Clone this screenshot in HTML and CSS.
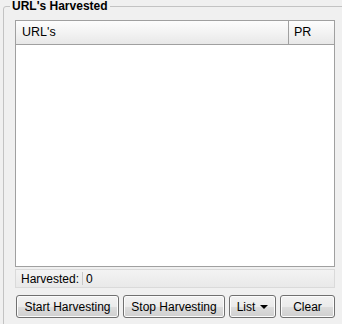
FILE: index.html
```html
<!DOCTYPE html>
<html>
<head>
<meta charset="utf-8">
<link rel="stylesheet" href="styles.css">
</head>
<body>
<fieldset class="group">
  <legend class="legend">URL's Harvested</legend>
  <div class="table">
    <div class="thead">
      <div class="th th-url">URL's</div>
      <div class="th th-pr">PR</div>
    </div>
    <div class="tbody"></div>
  </div>
  <div class="status">
    <span class="status-label">Harvested:</span>
    <span class="status-sep"></span>
    <span class="status-value">0</span>
  </div>
  <div class="buttons">
    <button class="btn btn-start">Start Harvesting</button>
    <button class="btn btn-stop">Stop Harvesting</button>
    <button class="btn btn-list">List <span class="caret"></span></button>
    <button class="btn btn-clear">Clear</button>
  </div>
</fieldset>
</body>
</html>
```
FILE: styles.css
```css
html, body {
  margin: 0;
  padding: 0;
  background: #f0f0f0;
  overflow: hidden;
}
body {
  width: 342px;
  height: 324px;
  font-family: "Liberation Sans", Arial, sans-serif;
  font-size: 12px;
  color: #000;
}
.group {
  margin: 0 0 0 3px;
  padding: 7px 10px 10px 11px;
  border: 1px solid #c3c3c3;
  border-radius: 3px;
  width: 320px;
}
.legend {
  margin-left: -5px;
  padding: 0 2px;
  font-weight: bold;
  font-size: 12px;
  line-height: 13px;
}
.table {
  width: 318px;
  height: 245px;
  border: 1px solid #a0a0a0;
  background: #fff;
  display: flex;
  flex-direction: column;
}
.thead {
  display: flex;
  height: 23px;
  border-bottom: 1px solid #a0a0a0;
  background: linear-gradient(#fdfdfd, #f3f3f3 50%, #e8e8e8);
}
.th {
  line-height: 23px;
  font-size: 12.5px;
}
.th-url {
  flex: 1;
  padding-left: 6px;
  border-right: 1px solid #a0a0a0;
}
.th-pr {
  width: 40px;
  padding-left: 5px;
}
.tbody {
  flex: 1;
  background: #fff;
}
.status {
  margin-top: 2px;
  width: 318px;
  height: 17px;
  border: 1px solid #dadada;
  background: linear-gradient(#f3f3f3, #e9e9e9);
  display: flex;
  align-items: center;
  font-size: 12px;
}
.status-label {
  padding-left: 5px;
}
.status-sep {
  width: 1px;
  height: 13px;
  background: #c8c8c8;
  margin: 0 3px 0 3px;
}
.buttons {
  display: flex;
  margin-top: 7px;
  margin-left: 1px;
}
.btn {
  box-sizing: border-box;
  height: 23px;
  margin: 0 4px 0 0;
  padding: 0;
  border: 1px solid #707070;
  border-radius: 3px;
  box-shadow: inset 0 0 0 1px #fcfcfc;
  background: linear-gradient(#f2f2f2 0%, #ebebeb 50%, #dddddd 51%, #cfcfcf 100%);
  font-family: "Liberation Sans", Arial, sans-serif;
  font-size: 12px;
  color: #000;
  display: flex;
  align-items: center;
  justify-content: center;
}
.btn-start { width: 103px; }
.btn-stop { width: 102px; }
.btn-list { width: 47px; }
.btn-clear { width: 55px; margin-right: 0; }
.caret {
  display: inline-block;
  width: 0;
  height: 0;
  margin-left: 5px;
  border-left: 4px solid transparent;
  border-right: 4px solid transparent;
  border-top: 4px solid #000;
}
```
